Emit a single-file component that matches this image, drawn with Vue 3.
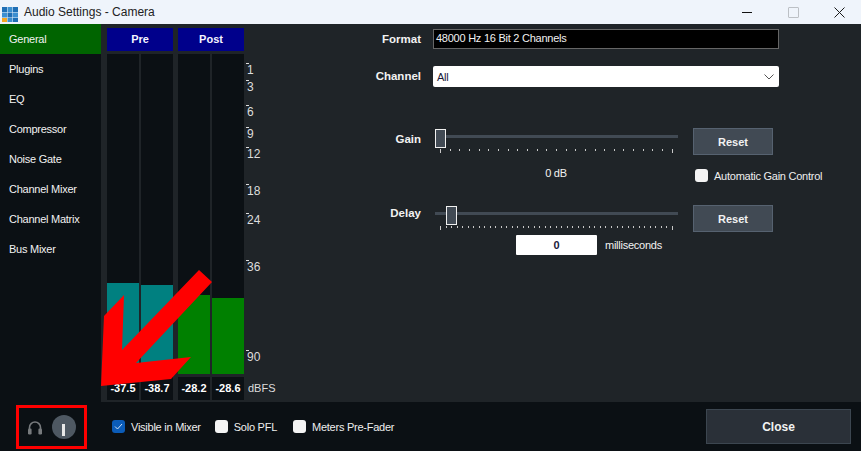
<template>
  <div class="window">
    <header class="titlebar">
      <svg class="app-icon" width="18" height="18" viewBox="0 0 18 18">
        <rect x="2" y="3" width="5" height="5" fill="#1f6fb5" />
        <rect x="7.5" y="3" width="5" height="5" fill="#3d8fd0" />
        <rect x="13" y="3" width="5" height="5" fill="#1f6fb5" />
        <rect x="2" y="8.5" width="5" height="5" fill="#3d8fd0" />
        <rect x="7.5" y="8.5" width="5" height="5" fill="#1f6fb5" />
        <rect x="13" y="8.5" width="5" height="5" fill="#3d8fd0" />
        <rect x="2" y="14" width="5" height="5" fill="#f5a623" />
        <rect x="7.5" y="14" width="5" height="5" fill="#3d8fd0" />
        <rect x="13" y="14" width="5" height="5" fill="#1f6fb5" />
      </svg>
      <span class="title">Audio Settings - Camera</span>
      <div class="win-controls">
        <span class="win-min"></span>
        <span class="win-max"></span>
        <svg class="win-close" width="11" height="11" viewBox="0 0 11 11">
          <path d="M0.5 0.5 L10.5 10.5 M10.5 0.5 L0.5 10.5" stroke="#1a1a1a" stroke-width="1" fill="none" />
        </svg>
      </div>
    </header>

    <div class="main">
      <nav class="sidebar">
        <div
          v-for="(item, i) in menu"
          :key="item"
          :class="['nav-item', { active: i === 0 }]"
        >
          {{ item }}
        </div>
      </nav>

      <section class="meters">
        <div v-for="group in groups" :key="group.name" class="meter-group">
          <div class="meter-head">{{ group.name }}</div>
          <div class="meter-cols">
            <div v-for="bar in group.bars" :key="bar.value" class="meter-col">
              <div class="meter-track">
                <div class="meter-fill" :style="{ height: bar.height + 'px', background: group.color }"></div>
              </div>
              <div class="meter-value">{{ bar.value }}</div>
            </div>
          </div>
        </div>
        <div class="scale">
          <div v-for="s in scale" :key="s.label" class="scale-mark" :style="{ top: s.y + 'px' }">
            <span class="scale-tick"></span>
            <span class="scale-label">{{ s.label }}</span>
          </div>
          <div class="scale-unit">dBFS</div>
        </div>
      </section>

      <section class="settings">
        <div class="row row-format">
          <label class="bold-label">Format</label>
          <div class="format-box">48000 Hz 16 Bit 2 Channels</div>
        </div>
        <div class="row row-channel">
          <label class="bold-label">Channel</label>
          <div class="select-box">
            <span>All</span>
            <svg width="10" height="6" viewBox="0 0 10 6">
              <path d="M0.5 0.5 L5 5 L9.5 0.5" stroke="#555" fill="none" />
            </svg>
          </div>
        </div>

        <div class="row row-gain">
          <label class="bold-label">Gain</label>
          <div class="slider">
            <div class="track"></div>
            <div class="thumb"></div>
            <div class="ticks">
              <i v-for="n in 25" :key="n" :class="{ long: n === 1 || n === 25 }"></i>
            </div>
          </div>
          <button class="reset">Reset</button>
        </div>
        <div class="row row-gain-info">
          <div class="db-text">0 dB</div>
          <label class="check agc"><span class="box"></span>Automatic Gain Control</label>
        </div>

        <div class="row row-delay">
          <label class="bold-label">Delay</label>
          <div class="slider">
            <div class="track"></div>
            <div class="thumb thumb-delay"></div>
            <div class="ticks">
              <i v-for="n in 43" :key="n" :class="{ long: n === 1 || n === 43 }"></i>
            </div>
          </div>
          <button class="reset">Reset</button>
        </div>
        <div class="row row-ms">
          <div class="ms-box">0</div>
          <span class="ms-text">milliseconds</span>
        </div>
      </section>
    </div>

    <footer class="footer">
      <div class="monitor">
        <svg width="16" height="15" viewBox="0 0 16 15">
          <path d="M2.5 9 V7.5 a5.5 5.5 0 0 1 11 0 V9" stroke="#777a7d" stroke-width="1.6" fill="none" />
          <rect x="1" y="8.5" width="3.6" height="6" rx="1.2" fill="#777a7d" />
          <rect x="11.4" y="8.5" width="3.6" height="6" rx="1.2" fill="#777a7d" />
        </svg>
        <div class="knob"><span class="knob-mark"></span></div>
      </div>
      <label class="check visible">
        <span class="box checked">
          <svg width="9" height="7" viewBox="0 0 9 7">
            <path d="M1 3.5 L3.5 6 L8 1" stroke="#cfe2f7" fill="none" />
          </svg>
        </span>
        Visible in Mixer
      </label>
      <label class="check solo"><span class="box"></span>Solo PFL</label>
      <label class="check prefader"><span class="box"></span>Meters Pre-Fader</label>
      <button class="close-btn">Close</button>
    </footer>

    <svg class="arrow" width="861" height="451" viewBox="0 0 861 451">
      <polygon points="101,386 104,316 124,295 122,350 199,270 212,282 136,363 191,357 171,379" fill="#ff0000" />
    </svg>
  </div>
</template>

<script setup>
const menu = [
  "General",
  "Plugins",
  "EQ",
  "Compressor",
  "Noise Gate",
  "Channel Mixer",
  "Channel Matrix",
  "Bus Mixer",
];

const groups = [
  {
    name: "Pre",
    color: "#008080",
    bars: [
      { value: "-37.5", height: 91 },
      { value: "-38.7", height: 89 },
    ],
  },
  {
    name: "Post",
    color: "#008000",
    bars: [
      { value: "-28.2", height: 79 },
      { value: "-28.6", height: 76 },
    ],
  },
];

const scale = [
  { label: "1", y: 39 },
  { label: "3", y: 56 },
  { label: "6", y: 81 },
  { label: "9", y: 103 },
  { label: "12", y: 123 },
  { label: "18", y: 160 },
  { label: "24", y: 189 },
  { label: "36", y: 236 },
  { label: "90", y: 326 },
];
</script>

<style>
html,
body {
  margin: 0;
  background: #1f2428;
}
</style>

<style scoped>
.window {
  position: relative;
  width: 861px;
  height: 451px;
  overflow: hidden;
  display: flex;
  flex-direction: column;
  background: #1f2428;
  color: #f2f2f2;
  font-family: "Liberation Sans", Arial, sans-serif;
  font-size: 11px;
  letter-spacing: -0.25px;
}

.titlebar {
  height: 24px;
  flex: none;
  display: flex;
  align-items: center;
  background: #eff4fb;
  color: #222;
}

.app-icon {
  margin-top: 1px;
  flex: none;
}

.title {
  margin-left: 6px;
  font-size: 12px;
  letter-spacing: 0;
}

.win-controls {
  margin-left: auto;
  display: flex;
  align-items: center;
  padding-right: 16px;
}

.win-min {
  width: 10px;
  height: 1px;
  background: #111;
}

.win-max {
  width: 9px;
  height: 9px;
  margin-left: 36px;
  border: 1px solid #bcc0c5;
  border-radius: 1px;
}

.win-close {
  margin-left: 35px;
}

.main {
  flex: 1;
  display: flex;
  min-height: 0;
}

.sidebar {
  width: 101px;
  flex: none;
  background: #0b1014;
}

.nav-item {
  height: 30px;
  padding-left: 9px;
  box-sizing: border-box;
  display: flex;
  align-items: center;
}

.nav-item.active {
  background: #006400;
}

.meters {
  position: relative;
  display: flex;
  gap: 5px;
  width: 137px;
  padding: 4px 0 2px 6px;
  flex: none;
}

.meter-group {
  width: 66px;
  display: flex;
  flex-direction: column;
}

.meter-head {
  height: 23px;
  flex: none;
  background: #00008b;
  color: #f4f4ff;
  font-weight: 700;
  letter-spacing: 0;
  text-align: center;
  line-height: 23px;
}

.meter-cols {
  flex: 1;
  display: flex;
  gap: 2px;
  margin-top: 3px;
}

.meter-col {
  flex: 1;
  display: flex;
  flex-direction: column;
}

.meter-track {
  flex: 1;
  display: flex;
  align-items: flex-end;
  background: #0b1014;
}

.meter-fill {
  width: 100%;
}

.meter-value {
  height: 23px;
  margin-top: 3px;
  flex: none;
  background: #0b1014;
  color: #fff;
  font-weight: 700;
  letter-spacing: 0;
  text-align: center;
  line-height: 23px;
}

.scale {
  position: absolute;
  left: 144px;
  top: 0;
  bottom: 0;
  width: 36px;
}

.scale-mark {
  position: absolute;
  left: 0;
  height: 14px;
}

.scale-tick {
  position: absolute;
  left: 1px;
  top: 0;
  width: 3px;
  height: 1px;
  background: #ddd;
}

.scale-label {
  position: absolute;
  left: 2px;
  top: 0;
  font-size: 12px;
  letter-spacing: 0;
  line-height: 14px;
  color: #ddd;
}

.scale-unit {
  position: absolute;
  left: 3px;
  top: 356px;
  font-size: 11px;
  letter-spacing: 0;
  line-height: 16px;
  color: #ddd;
}

.settings {
  flex: 1;
  min-width: 0;
}

.row {
  display: flex;
  align-items: flex-start;
}

.bold-label {
  width: 177px;
  text-align: right;
  font-size: 11.5px;
  font-weight: 700;
  letter-spacing: 0;
  flex: none;
}

.row-format {
  margin-top: 5px;
}

.row-format .bold-label {
  line-height: 21px;
}

.format-box {
  width: 342px;
  height: 18px;
  margin-left: 12px;
  padding-left: 2px;
  background: #000;
  border: 1px solid #666;
  line-height: 16px;
  color: #f2f2f2;
}

.row-channel {
  margin-top: 16px;
}

.row-channel .bold-label {
  line-height: 20px;
}

.select-box {
  width: 346px;
  height: 21px;
  margin-left: 12px;
  padding: 0 5px 0 4px;
  box-sizing: border-box;
  display: flex;
  align-items: center;
  justify-content: space-between;
  background: #fff;
  border-radius: 2px;
  color: #1a1a3a;
}

.row-gain {
  margin-top: 41px;
}

.row-gain .bold-label {
  line-height: 22px;
}

.row-delay .bold-label {
  line-height: 16px;
}

.slider {
  position: relative;
  width: 243px;
  height: 27px;
  margin-left: 14px;
  flex: none;
}

.track {
  position: absolute;
  left: 0;
  right: 0;
  top: 7px;
  height: 3px;
  background: #414a54;
}

.thumb {
  position: absolute;
  left: 0;
  top: 1px;
  width: 9px;
  height: 17px;
  background: #414a54;
  border: 1px solid #f0f0f0;
}

.thumb-delay {
  left: 11px;
}

.ticks {
  position: absolute;
  left: 5px;
  right: 5px;
  top: 21px;
  display: flex;
  justify-content: space-between;
}

.ticks i {
  width: 1px;
  height: 2px;
  background: #c8c8c8;
}

.ticks i.long {
  height: 4px;
}

.reset {
  width: 80px;
  height: 27px;
  margin-left: 15px;
  padding: 0;
  flex: none;
  background: #414a54;
  border: 1px solid #566270;
  color: #f2f2f2;
  font-family: inherit;
  font-size: 11px;
  font-weight: 700;
}

.row-gain-info {
  margin-top: 11px;
}

.db-text {
  width: 276px;
  margin-left: 174px;
  text-align: center;
  line-height: 15px;
  flex: none;
}

.check {
  display: flex;
  align-items: center;
  color: #eee;
}

.box {
  width: 13px;
  height: 13px;
  flex: none;
  margin-right: 6px;
  display: flex;
  align-items: center;
  justify-content: center;
  background: #f4f4f4;
  border-radius: 3px;
}

.box.checked {
  background: #0b5cb8;
}

.agc {
  margin: 3px 0 0 1px;
}

.row-delay {
  margin-top: 23px;
}

.row-ms {
  margin-top: 3px;
  align-items: center;
}

.ms-box {
  width: 81px;
  height: 20px;
  margin-left: 272px;
  background: #fff;
  color: #1a1a3a;
  text-align: center;
  line-height: 20px;
  font-weight: 700;
  border-radius: 1px;
}

.ms-text {
  margin-left: 8px;
}

.footer {
  height: 49px;
  flex: none;
  display: flex;
  align-items: center;
  position: relative;
  background: #0b1014;
}

.monitor {
  width: 71px;
  height: 44px;
  margin: 1px 0 0 16px;
  padding-left: 8px;
  box-sizing: border-box;
  display: flex;
  align-items: center;
  gap: 9px;
  border: 3px solid #ff0000;
  flex: none;
}

.knob {
  width: 24px;
  height: 24px;
  border-radius: 50%;
  background: #4e5862;
  position: relative;
  flex: none;
}

.knob-mark {
  position: absolute;
  left: 10px;
  top: 9px;
  width: 3px;
  height: 12px;
  background: #e8e8e8;
}

.visible {
  margin-left: 25px;
}

.solo {
  margin-left: 14px;
}

.prefader {
  margin-left: 16px;
}

.close-btn {
  width: 145px;
  height: 35px;
  margin-left: auto;
  margin-right: 10px;
  background: #2a3038;
  border: 1px solid #3c4650;
  color: #f2f2f2;
  font-family: inherit;
  font-size: 12px;
  font-weight: 700;
}

.arrow {
  position: absolute;
  left: 0;
  top: 0;
  pointer-events: none;
}
</style>
